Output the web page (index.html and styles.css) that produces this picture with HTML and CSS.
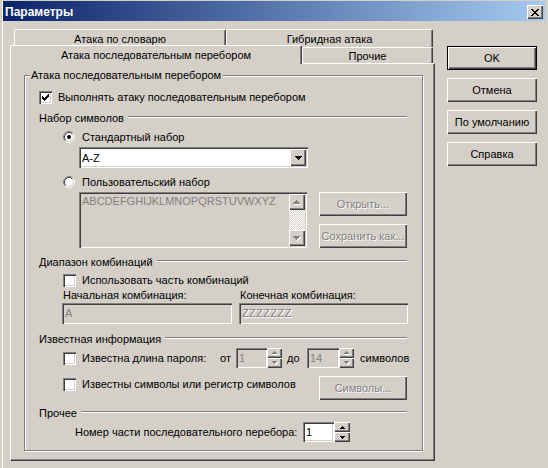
FILE: index.html
```html
<!DOCTYPE html>
<html lang="ru">
<head>
<meta charset="utf-8">
<title>Параметры</title>
<link rel="stylesheet" href="styles.css">
</head>
<body>
<div class="window">
  <div class="titlebar">
    <span class="title">Параметры</span>
    <span class="close raised"><svg width="8" height="7" viewBox="0 0 8 7" shape-rendering="crispEdges"><path fill="#000" d="M0 0h2v1h-2zM6 0h2v1h-2zM1 1h2v1h-2zM5 1h2v1h-2zM2 2h4v1h-4zM3 3h2v1h-2zM2 4h4v1h-4zM1 5h2v1h-2zM5 5h2v1h-2zM0 6h2v1h-2zM6 6h2v1h-2z"/></svg></span>
  </div>
  <div class="main">
    <div class="tabctl">
      <div class="tabrow back">
        <div class="tab t1">Атака по словарю</div>
        <div class="tab t2">Гибридная атака</div>
      </div>
      <div class="tabrow front">
        <div class="tab sel">Атака последовательным перебором</div>
        <div class="tab t4">Прочие</div>
      </div>
      <div class="panel">
        <div class="group">
          <div class="legend">Атака последовательным перебором</div>

          <div class="row r-cb1">
            <span class="chk"><svg width="7" height="7" viewBox="0 0 7 7" shape-rendering="crispEdges"><path fill="#000" d="M6 0h1v1h-1zM5 1h2v1h-2zM0 2h1v1h-1zM4 2h3v1h-3zM0 3h2v1h-2zM3 3h3v1h-3zM0 4h5v1h-5zM1 5h3v1h-3zM2 6h1v1h-1z"/></svg></span>
            <span class="lbl">Выполнять атаку последовательным перебором</span>
          </div>

          <div class="sect s1"><span>Набор символов</span><i></i></div>

          <div class="row r-rad1">
            <svg class="radio" width="12" height="12" viewBox="0 0 12 12"><circle cx="6" cy="6" r="4.5" fill="#fff"/><path d="M2.11 9.89A5.5 5.5 0 0 1 9.89 2.11" stroke="#808080" fill="none"/><path d="M9.89 2.11A5.5 5.5 0 0 1 2.11 9.89" stroke="#fff" fill="none"/><path d="M2.82 9.18A4.5 4.5 0 0 1 9.18 2.82" stroke="#404040" fill="none"/><path d="M9.18 2.82A4.5 4.5 0 0 1 2.82 9.18" stroke="#d4d0c8" fill="none"/><circle cx="6" cy="6" r="2" fill="#000"/></svg>
            <span class="lbl rl">Стандартный набор</span>
          </div>

          <div class="combo sunken">
            <span class="cval">A-Z</span>
            <span class="ddbtn raised"><svg width="7" height="4" viewBox="0 0 7 4" shape-rendering="crispEdges"><path fill="#000" d="M0 0h7v1h-1v1h-1v1h-1v1h-1v-1h-1v-1h-1v-1h-1z"/></svg></span>
          </div>

          <div class="row r-rad2">
            <svg class="radio" width="12" height="12" viewBox="0 0 12 12"><circle cx="6" cy="6" r="4.5" fill="#fff"/><path d="M2.11 9.89A5.5 5.5 0 0 1 9.89 2.11" stroke="#808080" fill="none"/><path d="M9.89 2.11A5.5 5.5 0 0 1 2.11 9.89" stroke="#fff" fill="none"/><path d="M2.82 9.18A4.5 4.5 0 0 1 9.18 2.82" stroke="#404040" fill="none"/><path d="M9.18 2.82A4.5 4.5 0 0 1 2.82 9.18" stroke="#d4d0c8" fill="none"/></svg>
            <span class="lbl rl">Пользовательский набор</span>
          </div>

          <div class="row r-ta">
            <div class="textarea sunken">
              <div class="tatext">ABCDEFGHIJKLMNOPQRSTUVWXYZ</div>
              <div class="vscroll">
                <span class="sbtn raised"><svg width="8" height="5" viewBox="0 0 8 5" shape-rendering="crispEdges"><path fill="#fff" transform="translate(1 1)" d="M3 0h1v1h1v1h1v1h1v1h-7v-1h1v-1h1v-1h1z"/><path fill="#808080" d="M3 0h1v1h1v1h1v1h1v1h-7v-1h1v-1h1v-1h1z"/></svg></span>
                <span class="track"></span>
                <span class="sbtn raised"><svg width="8" height="5" viewBox="0 0 8 5" shape-rendering="crispEdges"><path fill="#fff" transform="translate(1 1)" d="M0 0h7v1h-1v1h-1v1h-1v1h-1v-1h-1v-1h-1v-1h-1z"/><path fill="#808080" d="M0 0h7v1h-1v1h-1v1h-1v1h-1v-1h-1v-1h-1v-1h-1z"/></svg></span>
              </div>
            </div>
            <div class="tabtns">
              <div class="btn dis">Открыть...</div>
              <div class="btn dis">Сохранить как...</div>
            </div>
          </div>

          <div class="sect s2"><span>Диапазон комбинаций</span><i></i></div>

          <div class="row r-cb2">
            <span class="chk"></span>
            <span class="lbl">Использовать часть комбинаций</span>
          </div>

          <div class="row r-lbls">
            <span class="l1">Начальная комбинация:</span>
            <span>Конечная комбинация:</span>
          </div>

          <div class="row r-inps">
            <div class="edit sunken dis in1">A</div>
            <div class="edit sunken dis in2"><span class="hatch">ZZZZZZZ</span></div>
          </div>

          <div class="sect s3"><span>Известная информация</span><i></i></div>

          <div class="row r-cb3">
            <div class="cbwrap w3">
              <span class="chk"></span>
              <span class="lbl">Известна длина пароля:</span>
            </div>
            <span class="ot">от</span>
            <div class="edit sunken dis num n1">1</div>
            <div class="spin">
              <span class="sb raised"><svg width="6" height="4" viewBox="0 0 6 4" shape-rendering="crispEdges"><path fill="#fff" transform="translate(1 1)" d="M2 0h1v1h1v1h1v1h-5v-1h1v-1h1z"/><path fill="#808080" d="M2 0h1v1h1v1h1v1h-5v-1h1v-1h1z"/></svg></span>
              <span class="sb raised"><svg width="6" height="4" viewBox="0 0 6 4" shape-rendering="crispEdges"><path fill="#fff" transform="translate(1 1)" d="M0 0h5v1h-1v1h-1v1h-1v-1h-1v-1h-1z"/><path fill="#808080" d="M0 0h5v1h-1v1h-1v1h-1v-1h-1v-1h-1z"/></svg></span>
            </div>
            <span class="do">до</span>
            <div class="edit sunken dis num n2">14</div>
            <div class="spin">
              <span class="sb raised"><svg width="6" height="4" viewBox="0 0 6 4" shape-rendering="crispEdges"><path fill="#fff" transform="translate(1 1)" d="M2 0h1v1h1v1h1v1h-5v-1h1v-1h1z"/><path fill="#808080" d="M2 0h1v1h1v1h1v1h-5v-1h1v-1h1z"/></svg></span>
              <span class="sb raised"><svg width="6" height="4" viewBox="0 0 6 4" shape-rendering="crispEdges"><path fill="#fff" transform="translate(1 1)" d="M0 0h5v1h-1v1h-1v1h-1v-1h-1v-1h-1z"/><path fill="#808080" d="M0 0h5v1h-1v1h-1v1h-1v-1h-1v-1h-1z"/></svg></span>
            </div>
            <span class="sym">символов</span>
          </div>

          <div class="row r-cb4">
            <div class="cbwrap w4">
              <span class="chk"></span>
              <span class="lbl">Известны символы или регистр символов</span>
            </div>
            <div class="btn dis symbtn">Символы...</div>
          </div>

          <div class="sect s4"><span>Прочее</span><i></i></div>

          <div class="row r-last">
            <span class="lastlbl">Номер части последовательного перебора:</span>
            <div class="edit sunken num n3">1</div>
            <div class="spin sp3">
              <span class="sb raised"><svg width="5" height="3" viewBox="0 0 5 3" shape-rendering="crispEdges"><path fill="#000" d="M2 0h1v1h1v1h1v1h-5v-1h1v-1h1z"/></svg></span>
              <span class="sb raised"><svg width="5" height="3" viewBox="0 0 5 3" shape-rendering="crispEdges"><path fill="#000" d="M0 0h5v1h-1v1h-1v1h-1v-1h-1v-1h-1z"/></svg></span>
            </div>
          </div>
        </div>
      </div>
    </div>
    <div class="buttons">
      <div class="btn default">OK</div>
      <div class="btn">Отмена</div>
      <div class="btn">По умолчанию</div>
      <div class="btn">Справка</div>
    </div>
  </div>
</div>
</body>
</html>
```
FILE: styles.css
```css
* { box-sizing: border-box; }
html, body { margin: 0; padding: 0; }
body {
  font-family: "Liberation Sans", Arial, sans-serif;
  font-size: 11px;
  color: #000;
  background: #d4d0c8;
}
.window {
  width: 548px;
  height: 468px;
  background: #d4d0c8;
  padding-top: 1px;
  box-shadow: inset 2px 0 0 #d4d0c8, inset 3px 0 0 #fff;
  overflow: hidden;
}
.titlebar {
  margin: 0 3px;
  height: 20px;
  background: linear-gradient(to right, #0a246a, #a6caf0);
  display: flex;
  align-items: center;
  justify-content: space-between;
  padding: 2px 2px 0 2px;
}
.title {
  color: #fff;
  font-weight: bold;
  font-size: 12px;
  line-height: 14px;
}
.raised {
  background: #d4d0c8;
  box-shadow: inset 1px 1px #fff, inset -1px -1px #404040, inset -2px -2px #808080;
}
.sunken {
  box-shadow: inset 1px 1px #808080, inset 2px 2px #404040, inset -1px -1px #fff, inset -2px -2px #d4d0c8;
}
.close {
  width: 16px;
  height: 14px;
  display: flex;
  align-items: center;
  justify-content: center;
}
.main {
  display: flex;
  align-items: flex-start;
}
.tabctl {
  margin: 8px 0 0 10px;
  width: 425px;
}
.tabrow { display: flex; align-items: flex-end; }
.tabrow.back { height: 18px; padding-left: 4px; }
.tabrow.front { height: 16px; }
.tab {
  display: flex;
  align-items: center;
  justify-content: center;
  background: #d4d0c8;
  border-left: 1px solid #fff;
  border-top: 1px solid #fff;
  border-right: 1px solid #404040;
  box-shadow: inset -1px 0 #808080;
  border-radius: 2px 2px 0 0;
  white-space: nowrap;
}
.back .tab { height: 18px; }
.t1 { width: 212px; }
.t2 { width: 207px; }
.tab.sel {
  width: 292px;
  height: 19px;
  margin-bottom: -1px;
  position: relative;
  z-index: 1;
}
.t4 { width: 131px; height: 16px; }
.panel {
  height: 398px;
  border-left: 1px solid #fff;
  border-top: 1px solid #fff;
  border-right: 1px solid #404040;
  border-bottom: 1px solid #404040;
  box-shadow: inset -1px -1px #808080;
  padding: 11px 0 0 13px;
}
.group {
  width: 399px;
  height: 376px;
  border: 1px solid #808080;
  box-shadow: inset 1px 1px #fff, 1px 1px #fff;
}
.legend {
  display: table;
  height: 13px;
  line-height: 13px;
  margin: -7px 0 0 5px;
  padding: 0 2px 0 1px;
  background: #d4d0c8;
}
.row {
  display: flex;
  align-items: center;
  white-space: nowrap;
}
.lbl { line-height: 14px; margin-left: 6px; }
.lbl.rl { margin-left: 7px; }
.chk {
  width: 13px;
  height: 13px;
  flex: none;
  background: #fff;
  box-shadow: inset 1px 1px #808080, inset 2px 2px #404040, inset -1px -1px #fff, inset -2px -2px #d4d0c8;
  display: flex;
  align-items: center;
  justify-content: center;
}
.radio { flex: none; display: block; }
.sect {
  display: flex;
  align-items: center;
  height: 14px;
  margin-left: 14px;
  margin-right: 15px;
  white-space: nowrap;
}
.sect i {
  flex: 1;
  height: 2px;
  border-top: 1px solid #808080;
  border-bottom: 1px solid #fff;
  margin: 0 0 2px 4px;
}
.r-cb1 { margin: 7px 0 0 14px; height: 16px; }
.s1 { margin-top: 6px; }
.r-rad1 { margin: 5px 0 0 38px; height: 14px; }
.combo {
  margin: 3px 0 0 54px;
  width: 229px;
  height: 21px;
  background: #fff;
  display: flex;
  align-items: center;
  padding: 2px;
}
.cval { flex: 1; padding-left: 1px; padding-top: 1px; }
.ddbtn {
  width: 16px;
  height: 17px;
  display: flex;
  align-items: center;
  justify-content: center;
}
.r-rad2 { margin: 7px 0 0 38px; height: 14px; }
.r-ta { margin: 3px 0 0 54px; height: 56px; align-items: flex-start; }
.textarea {
  width: 228px;
  height: 56px;
  background: #d4d0c8;
  display: flex;
  padding: 2px;
}
.tatext {
  flex: 1;
  color: #808080;
  padding: 1px 0 0 1px;
  line-height: 13px;
  overflow: hidden;
}
.vscroll {
  width: 16px;
  display: flex;
  flex-direction: column;
}
.sbtn {
  height: 16px;
  display: flex;
  align-items: center;
  justify-content: center;
}
.track {
  flex: 1;
  background-image: repeating-conic-gradient(#fff 0 25%, #d4d0c8 0 50%);
  background-size: 2px 2px;
}
.tabtns {
  margin-left: 12px;
  display: flex;
  flex-direction: column;
  gap: 8px;
}
.tabtns .btn { width: 88px; height: 24px; }
.btn {
  display: flex;
  align-items: center;
  justify-content: center;
  height: 24px;
  background: #d4d0c8;
  box-shadow: inset 1px 1px #fff, inset -1px -1px #404040, inset -2px -2px #808080;
  white-space: nowrap;
}
.btn.dis { color: #808080; text-shadow: 1px 1px 0 #fff; }
.btn.default {
  border: 1px solid #000;
}
.s2 { margin-top: 7px; }
.r-cb2 { margin: 4px 0 0 38px; height: 14px; }
.r-lbls { margin: 1px 0 0 38px; height: 14px; }
.l1 { width: 177px; }
.r-inps { margin: 1px 0 0 37px; height: 21px; }
.edit {
  height: 21px;
  background: #fff;
  padding: 2px 0 0 3px;
  line-height: 16px;
}
.edit.dis { background: #d4d0c8; color: #808080; }
.in1 { width: 170px; }
.in2 { width: 169px; margin-left: 7px; }
.hatch { letter-spacing: 0.4px; color: #808080; text-shadow: 1px 1px 0 #fff; }
.s3 { margin-top: 8px; }
.r-cb3 { margin: 2px 0 0 38px; height: 20px; }
.cbwrap { display: flex; align-items: center; }
.w3 { width: 157px; }
.ot { width: 16px; }
.num { width: 31px; height: 20px; }
.n2 { width: 32px; }
.spin {
  width: 15px;
  height: 20px;
  display: flex;
  flex-direction: column;
}
.sb {
  height: 10px;
  display: flex;
  align-items: center;
  justify-content: center;
}
.do { width: 25px; padding-left: 5px; }
.sym { padding-left: 6px; }
.r-cb4 { margin: 8px 0 0 38px; height: 24px; align-items: flex-start; }
.w4 { width: 256px; height: 14px; margin-top: 1px; }
.symbtn { width: 88px; }
.s4 { margin-top: 6px; }
.r-last { margin: 2px 0 0 50px; height: 20px; }
.lastlbl { width: 228px; }
.sp3 { width: 16px; }
.buttons {
  margin: 25px 0 0 12px;
  width: 90px;
  display: flex;
  flex-direction: column;
  gap: 8px;
}
```
